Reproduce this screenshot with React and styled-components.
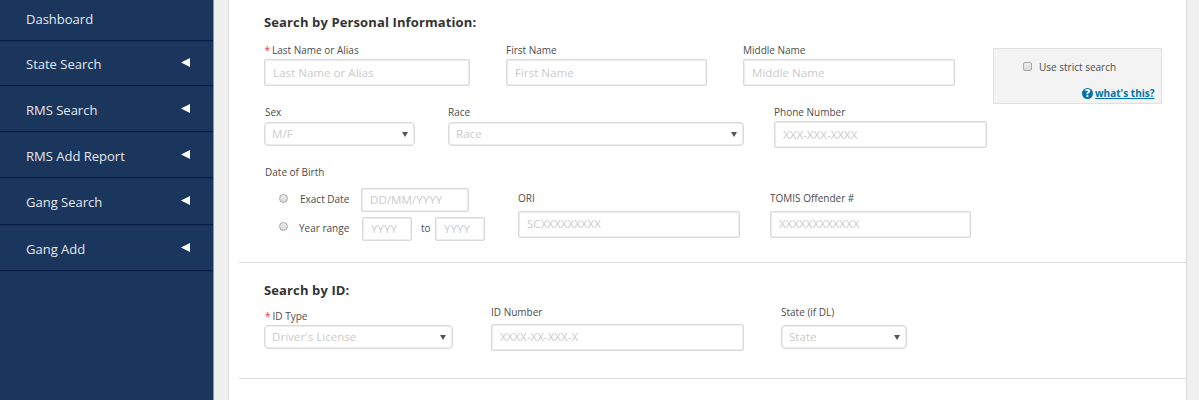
import React from 'react';
import styled, { createGlobalStyle } from 'styled-components';

const GlobalStyle = createGlobalStyle`
  * { box-sizing: border-box; }
  body { margin: 0; overflow: hidden; background: #fff; font-family: "Open Sans", "Liberation Sans", sans-serif; }
`;

const Page = styled.div`
  display: flex;
  width: 1199px;
  height: 400px;
  background: #f0f0f0;
`;

const Sidebar = styled.nav`
  width: 214px;
  flex: none;
  margin-right: 14px;
  background: #1b365d;
  border-right: 1px solid #8896aa;
`;

const NavItem = styled.a`
  display: flex;
  align-items: center;
  justify-content: space-between;
  height: ${(p) => p.$height}px;
  padding: ${(p) => (p.$nested ? '2px 23px 0 26px' : '0 23px 2px 26px')};
  border-bottom: 1px solid #061b47;
  box-shadow: 0 1px 0 #162f58;
  color: #e4e8ee;
  font-size: 13px;
  line-height: 18px;
`;

const Arrow = styled.svg`
  width: 9px;
  height: 9px;
  fill: #fff;
  margin-bottom: 3px;
`;

const Panel = styled.main`
  width: 959px;
  background: #fff;
  border-left: 1px solid #dcdcdc;
  border-right: 1px solid #dcdcdc;
`;

const Section = styled.section`
  height: ${(p) => p.$height}px;
  margin-left: 10px;
  padding: ${(p) => p.$top}px 0 0 25px;
  border-bottom: 1px solid #dcdcdc;
`;

const Heading = styled.h2`
  margin: 0;
  height: 18px;
  font-size: 13px;
  font-weight: 700;
  line-height: 18px;
  letter-spacing: 0.12px;
  color: #333;
`;

const Row = styled.div`
  display: flex;
  align-items: flex-start;
  height: ${(p) => p.$height}px;
`;

const Field = styled.div`
  width: ${(p) => p.$width}px;
  margin-left: ${(p) => p.$left || 0}px;
  padding-top: ${(p) => p.$top || 0}px;
  flex: none;
`;

const Label = styled.div`
  height: ${(p) => p.$height || 17}px;
  padding-left: ${(p) => p.$indent || 0}px;
  font-size: 10px;
  line-height: 14px;
  color: #4c4c4c;
  white-space: nowrap;
`;

const Required = styled.span`
  color: #f03434;
  margin-right: 2px;
`;

const TextBox = styled.div`
  display: flex;
  align-items: center;
  justify-content: space-between;
  width: ${(p) => p.$width}px;
  height: ${(p) => p.$height || 27}px;
  flex: none;
  padding: 0 8px ${(p) => p.$lift || 0}px;
  border: 1px solid #dadada;
  border-radius: 2px;
  box-shadow: inset 0 0 0 1px #ededed;
  background: #fff;
  font-size: 11.6px;
  line-height: 16px;
  color: #cbcbcb;
  white-space: nowrap;
`;

const SelectBox = styled(TextBox)`
  height: 24px;
  padding: 0 6px 0 7px;
  border-radius: 4px;
`;

const Caret = styled.svg`
  width: 6px;
  height: 5px;
  fill: #555;
`;

const Choice = styled.div`
  display: flex;
  align-items: flex-start;
  height: ${(p) => p.$height}px;
  padding-left: 15px;
`;

const Radio = styled.span`
  width: 9px;
  height: 9px;
  flex: none;
  margin-top: ${(p) => p.$top}px;
  border: 1px solid #a8a8a8;
  border-radius: 50%;
  background: linear-gradient(#ededed, #d8d8d8);
`;

const ChoiceText = styled.span`
  width: ${(p) => p.$width}px;
  padding-top: 4px;
  margin-left: ${(p) => p.$left}px;
  font-size: 10px;
  line-height: 14px;
  color: #4c4c4c;
  white-space: nowrap;
`;

const StrictCard = styled.aside`
  width: 169px;
  height: 56px;
  margin: 17px 0 0 38px;
  flex: none;
  border: 1px solid #dfdfdf;
  background: #f3f3f3;
`;

const StrictOption = styled.label`
  display: flex;
  align-items: center;
  height: 36px;
  padding-left: 29px;
  font-size: 10px;
  line-height: 14px;
  color: #4c4c4c;
`;

const Checkbox = styled.span`
  width: 9px;
  height: 9px;
  margin: 0 7px 1px 0;
  border: 1px solid #a8a8a8;
  border-radius: 2px;
  background: linear-gradient(#ededed, #dadada);
`;

const HelpLink = styled.a`
  display: flex;
  justify-content: flex-end;
  align-items: center;
  gap: 2px;
  padding-right: 6.5px;
  color: #0073aa;
  font-size: 10px;
  font-weight: 700;
  line-height: 16px;
`;

const HelpText = styled.span`
  text-decoration: underline;
`;

const HelpBadge = styled.span`
  width: 11px;
  height: 11px;
  border-radius: 50%;
  background: #0073aa;
  color: #fff;
  font-size: 10px;
  font-weight: 800;
  line-height: 11px;
  text-align: center;
`;

const navItems = [
  ['Dashboard', 41, false],
  ['State Search', 45, true],
  ['RMS Search', 46, true],
  ['RMS Add Report', 46, true],
  ['Gang Search', 47, true],
  ['Gang Add', 46, true],
];

function Select({ width, children }) {
  return (
    <SelectBox $width={width}>
      <span>{children}</span>
      <Caret viewBox="0 0 6 5"><path d="M0 0h6L3 5z" /></Caret>
    </SelectBox>
  );
}

function StrictSearch() {
  return (
    <StrictCard>
      <StrictOption><Checkbox />Use strict search</StrictOption>
      <HelpLink>
        <HelpBadge>?</HelpBadge>
        <HelpText>what's this?</HelpText>
      </HelpLink>
    </StrictCard>
  );
}

export default function App() {
  return (
    <>
      <GlobalStyle />
      <Page>
        <Sidebar>
          {navItems.map(([name, height, nested]) => (
            <NavItem key={name} $height={height} $nested={nested}>
              <span>{name}</span>
              {nested && <Arrow viewBox="0 0 9 9"><path d="M0 4.4 9 0v9z" /></Arrow>}
            </NavItem>
          ))}
        </Sidebar>
        <Panel>
          <Section $height={263} $top={13}>
            <Heading>Search by Personal Information:</Heading>
            <Row $height={73}>
              <Field $width={206} $top={12}>
                <Label $height={16} $indent={0.5}><Required>*</Required>Last Name or Alias</Label>
                <TextBox $width={206}>Last Name or Alias</TextBox>
              </Field>
              <Field $width={201} $left={36} $top={12}>
                <Label $height={16}>First Name</Label>
                <TextBox $width={201}>First Name</TextBox>
              </Field>
              <Field $width={212} $left={36} $top={12}>
                <Label $height={16}>Middle Name</Label>
                <TextBox $width={212}>Middle Name</TextBox>
              </Field>
              <StrictSearch />
            </Row>
            <Row $height={60}>
              <Field $width={151} $top={1}>
                <Label $indent={1}>Sex</Label>
                <Select width={151}>M/F</Select>
              </Field>
              <Field $width={296} $left={33} $top={1}>
                <Label>Race</Label>
                <Select width={296}>Race</Select>
              </Field>
              <Field $width={213} $left={30} $top={1}>
                <Label $height={16}>Phone Number</Label>
                <TextBox $width={213}>XXX-XXX-XXXX</TextBox>
              </Field>
            </Row>
            <Row $height={90}>
              <Field $width={254} $top={1}>
                <Label $height={23} $indent={1}>Date of Birth</Label>
                <Choice $height={29}>
                  <Radio $top={6} />
                  <ChoiceText $left={12} $width={61}>Exact Date</ChoiceText>
                  <TextBox $width={108} $height={24}>DD/MM/YYYY</TextBox>
                </Choice>
                <Choice $height={24}>
                  <Radio $top={5} />
                  <ChoiceText $left={11} $width={63}>Year range</ChoiceText>
                  <TextBox $width={50} $height={24}>YYYY</TextBox>
                  <ChoiceText $left={9} $width={14}>to</ChoiceText>
                  <TextBox $width={50} $height={24}>YYYY</TextBox>
                </Choice>
              </Field>
              <Field $width={222} $top={27}>
                <Label $height={20}>ORI</Label>
                <TextBox $width={222} $lift={1}>SCXXXXXXXXX</TextBox>
              </Field>
              <Field $width={201} $left={30} $top={27}>
                <Label $height={20}>TOMIS Offender #</Label>
                <TextBox $width={201} $lift={1}>XXXXXXXXXXXX</TextBox>
              </Field>
            </Row>
          </Section>
          <Section $height={116} $top={18}>
            <Heading>Search by ID:</Heading>
            <Row $height={70}>
              <Field $width={189} $top={10}>
                <Label $height={16} $indent={1}><Required>*</Required>ID Type</Label>
                <Select width={189}>Driver's License</Select>
              </Field>
              <Field $width={253} $left={38} $top={6}>
                <Label $height={19}>ID Number</Label>
                <TextBox $width={253} $lift={1}>XXXX-XX-XXX-X</TextBox>
              </Field>
              <Field $width={126} $left={37} $top={6}>
                <Label $height={20}>State (if DL)</Label>
                <Select width={126}>State</Select>
              </Field>
            </Row>
          </Section>
        </Panel>
      </Page>
    </>
  );
}
